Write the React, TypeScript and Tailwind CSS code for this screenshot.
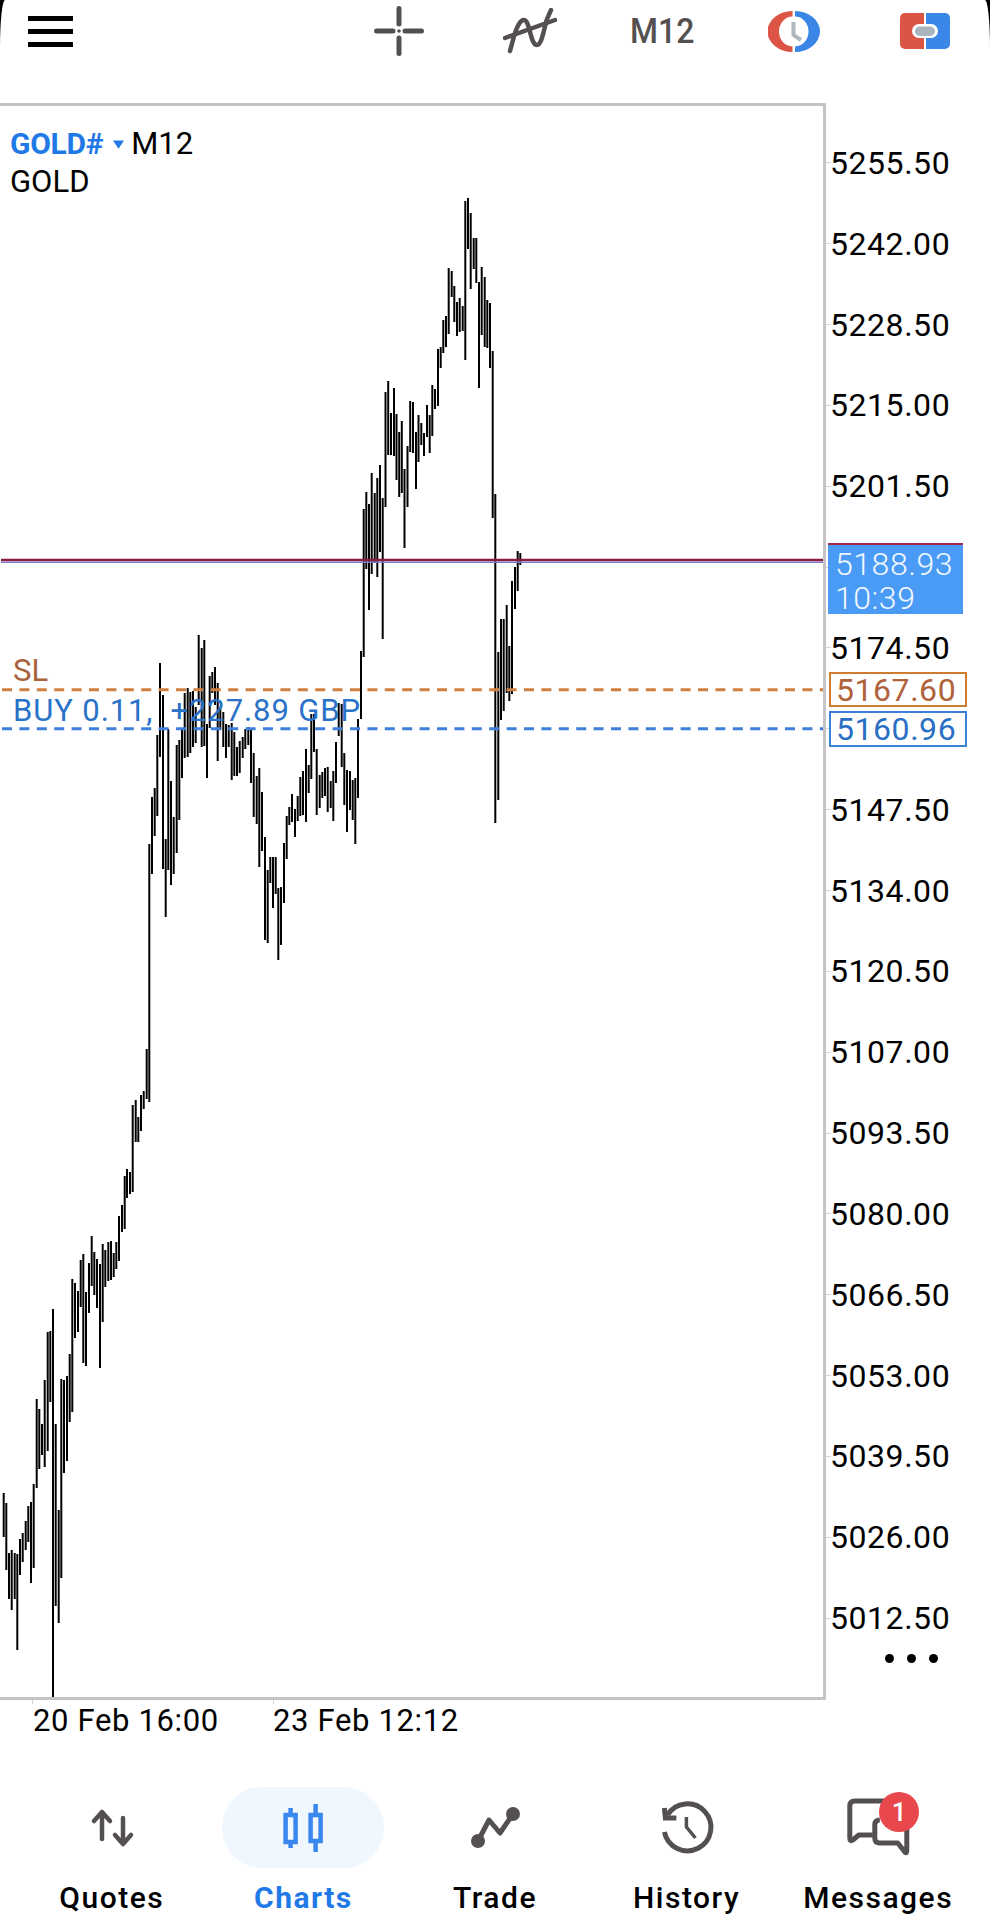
import React from 'react';

// [x, top, bottom] of every bar, traced from the chart
const BARS: number[][] = [
  [3.7,1493,1537],[6.3,1503,1570],[9,1553,1599],[11.7,1550,1610],[14.7,1553,1599],[17.3,1554,1650],[20,1539,1575],[22.7,1533,1562],
  [25.7,1521,1550],[28.3,1506,1542],[31,1502,1583],[33.7,1484,1568],[36.7,1399,1488],[39.3,1409,1469],[42,1424,1455],[44.7,1380,1467],
  [47.7,1332,1451],[50.3,1331,1402],[53,1309,1697],[55.7,1424,1606],[58.7,1510,1623],[61.3,1379,1578],[64,1380,1473],[67,1376,1461],
  [69.7,1354,1422],[72.3,1279,1412],[75,1283,1338],[78,1291,1332],[80.7,1260,1307],[83.3,1254,1363],[86,1292,1366],[89,1263,1313],
  [91.7,1236,1286],[94.3,1252,1295],[97,1259,1308],[100,1264,1368],[102.7,1244,1322],[105.3,1250,1287],[108.3,1242,1281],[111,1241,1280],
  [113.7,1253,1277],[116.3,1242,1269],[119,1216,1261],[122,1205,1232],[124.7,1176,1229],[127,1169,1198],[130,1172,1194],[132.7,1105,1192],
  [135.7,1100,1142],[138.3,1117,1142],[141,1095,1131],[143.7,1091,1109],[146.7,1049,1099],[149.3,844,1102],[152,797,874],[154.7,788,836],
  [157.3,735,816],[160,663,757],[163,695,869],[165.7,839,917],[168.3,729,870],[171,781,885],[173.7,817,874],[176.7,745,853],
  [179.3,740,820],[182,730,778],[184.7,693,758],[187.7,688,757],[190.3,692,753],[193,691,747],[195.7,707,743],[198.7,635,705],
  [201.7,648,747],[204.3,640,746],[207,724,778],[209.7,676,728],[212.3,672,693],[215,667,705],[217.7,683,761],[220.3,707,730],
  [223.3,712,747],[226,724,758],[228.7,725,747],[231.7,723,780],[234.3,732,776],[237,747,776],[239.7,741,773],[242.7,737,758],
  [245.3,729,749],[248.3,727,745],[251,730,783],[253.7,753,817],[256.7,776,824],[259.3,768,867],[262,792,851],[265,837,940],
  [267.7,870,943],[270.3,857,883],[273,857,908],[275.7,857,894],[278.3,888,960],[281,887,945],[284,843,903],[286.7,816,859],
  [289.3,807,825],[292,794,822],[295,809,837],[297.7,796,821],[300.3,777,816],[303,771,815],[306,749,822],[308.7,765,793],
  [311.3,714,779],[314,714,752],[316.7,749,815],[319.7,775,808],[322.3,772,798],[325,768,796],[327.7,767,812],[330.7,781,808],
  [333.3,771,821],[336,742,783],[338.7,703,736],[341.7,704,767],[344.3,753,805],[347,770,832],[350,771,810],[352.7,780,820],
  [355.3,778,844],[358,719,798],[361,651,719],[363.7,509,657],[366.3,492,569],[369,504,610],[371.7,473,574],[374.7,493,563],
  [377.3,478,577],[380,465,552],[382.7,498,639],[385.5,392,507],[388.2,381,455],[391,413,455],[394,388,456],[396.5,414,480],
  [399.2,432,497],[401.8,421,493],[404.5,469,548],[407.5,446,507],[410.2,401,452],[413,402,453],[416,432,489],[418.5,415,462],
  [421.3,423,445],[424,433,456],[427,405,437],[429.7,415,453],[432.3,385,436],[435,389,409],[438,349,406],[440.7,347,368],
  [443.3,320,353],[446,316,347],[448.7,268,334],[451.7,271,297],[454.3,286,322],[457,302,336],[459.7,298,332],[462.7,306,331],
  [465.3,201,360],[468,198,249],[470.7,213,289],[473.7,238,269],[476.3,238,283],[479,282,388],[481.7,267,335],[484.7,277,347],
  [487.3,300,348],[490,303,368],[492.7,351,518],[495.3,494,823],[498.3,652,800],[501,619,720],[503.7,619,711],[506.7,605,693],
  [509.3,646,701],[512,581,694],[515,567,609],[517.7,551,591],[520.3,553,565],
];

// the empty rows sit behind the price and order tags
const AXIS_LABELS = ['5255.50','5242.00','5228.50','5215.00','5201.50','','5174.50','','5147.50','5134.00','5120.50','5107.00','5093.50','5080.00','5066.50','5053.00','5039.50','5026.00','5012.50'];

function Chart() {
  return (
    <svg viewBox="0 106 823 1591" className="absolute inset-0 w-[823px] h-[1591px]">
      {BARS.map(([x, top, bottom]) => (
        <line key={x} x1={x} x2={x} y1={top} y2={bottom} stroke="#000" strokeWidth="2" />
      ))}
      <line x1="1" x2="823" y1="560" y2="560" stroke="#8c1c3e" strokeWidth="2.6" />
      <line x1="1" x2="823" y1="562.2" y2="562.2" stroke="#7d7cc4" strokeWidth="1.6" />
      <line x1="2" x2="823" y1="689.7" y2="689.7" stroke="#cf8040" strokeWidth="3" strokeDasharray="10 7.4" />
      <line x1="2" x2="823" y1="728.7" y2="728.7" stroke="#3f7fdc" strokeWidth="3" strokeDasharray="10 7.4" />
    </svg>
  );
}

function Header() {
  return (
    <div className="flex items-center h-[62px] mb-[41px]">
      <div className="ml-[28px] w-[45px] flex flex-col gap-[8px]">
        <div className="h-[5px] bg-black" />
        <div className="h-[5px] bg-black" />
        <div className="h-[5px] bg-black" />
      </div>
      <svg viewBox="374 6 50 50" className="ml-[301px] w-[50px] h-[50px]" fill="none" stroke="#555050" strokeWidth="5" strokeLinecap="round">
        <path d="M399 8.5V24M399 38V53.5M376.5 31H393M405 31H421.5" />
        <circle cx="399" cy="31" r="1.8" fill="#555050" stroke="none" />
      </svg>
      <svg viewBox="503 8 54 46" className="ml-[79px] w-[54px] h-[46px]" fill="none" stroke="#555050" strokeWidth="4.5" strokeLinecap="round">
        <path d="M510 51L513 40C516 28 520 20 524 20C530 20 530 45 537 45C542 45 544 28 547 19L551 10" />
        <path d="M505 38L555 20" />
      </svg>
      <span className="ml-[73px] w-[65px] text-[32px] font-medium text-[#555050] scale-y-[1.12]">M12</span>
      <svg viewBox="767 11 52 41" className="ml-[73px] w-[52px] h-[41px]">
        <path d="M791.5 11A25 20.5 0 0 0 791.5 52V46.5A13.5 15 0 0 1 791.5 16.5Z" fill="#dc5445" />
        <path d="M794 11A25 20.5 0 0 1 794 52V46.5A13.5 15 0 0 0 794 16.5Z" fill="#3b87e8" />
        <path d="M792.5 22V35L800 40" fill="none" stroke="#b0b8c0" strokeWidth="4" />
      </svg>
      <svg viewBox="899 13 50 36" className="ml-[80px] w-[50px] h-[36px]">
        <path d="M904 13H923V49H904A5 5 0 0 1 899 44V18A5 5 0 0 1 904 13Z" fill="#dc5445" />
        <path d="M925 13H944A5 5 0 0 1 949 18V44A5 5 0 0 1 944 49H925Z" fill="#3b87e8" />
        <rect x="911" y="24" width="26" height="14" rx="7" fill="#fff" />
        <rect x="914" y="26.5" width="20" height="9.5" rx="4.7" fill="#aab4be" />
      </svg>
    </div>
  );
}

function PriceAxis() {
  return (
    <div className="relative flex-1 pt-[19.5px] text-[32px] leading-none tracking-[0.55px] text-black">
      {AXIS_LABELS.map((label, i) => (
        <div key={i} className="h-[80.85px] flex items-center">
          <div className="w-[5px] h-px bg-gray-300" />
          <span className="-ml-[1px]">{label}</span>
        </div>
      ))}
      <div className="absolute left-[2px] top-[440px] w-[135px] h-[71px] border-t-[2px] border-[#a52a4a] bg-[#4a9bf5] pl-[7px] pt-[2px] text-[#f2f8ff] leading-[34px] font-light">
        <div>5188.93</div>
        <div>10:39</div>
      </div>
      <div className="absolute left-[3px] top-[569px] w-[138px] h-[35px] border-[2px] border-[#d07b32] pl-[5px] flex items-center text-[#b0623a]">5167.60</div>
      <div className="absolute left-[3px] top-[608px] w-[138px] h-[36px] border-[2px] border-[#3b82d6] pl-[5px] flex items-center text-[#2a6fc4]">5160.96</div>
      <div className="absolute left-[59px] top-[1551px] flex gap-[13px]">
        <div className="w-[9px] h-[9px] rounded-full bg-black" />
        <div className="w-[9px] h-[9px] rounded-full bg-black" />
        <div className="w-[9px] h-[9px] rounded-full bg-black" />
      </div>
    </div>
  );
}

function TimeAxis() {
  return (
    <div className="flex h-[87px] pl-[32px] text-[31px] leading-none tracking-[0.65px] text-black">
      <div className="w-[241px]">
        <div className="w-px h-[4px] bg-gray-300" />
        <div className="mt-[1px] ml-[1px]">20 Feb 16:00</div>
      </div>
      <div>
        <div className="w-px h-[4px] bg-gray-300" />
        <div className="mt-[1px]">23 Feb 12:12</div>
      </div>
    </div>
  );
}

const TAB_ICONS: Record<string, React.ReactNode> = {
  Quotes: (
    <svg viewBox="80 1796 64 64" className="w-[64px] h-[64px]" fill="none" stroke="#555050" strokeWidth="4.5" strokeLinecap="round" strokeLinejoin="round">
      <path d="M102 1839V1813M94 1821L102 1812L110 1821" />
      <path d="M123 1818V1843M115 1835L123 1844L131 1835" />
    </svg>
  ),
  Charts: (
    <svg viewBox="271.4 1796 64 64" className="w-[64px] h-[64px]" fill="none" stroke="#3b87f0" strokeWidth="4.5">
      <path d="M291 1808V1848M316 1804V1852" />
      <rect x="286" y="1815" width="10" height="27" fill="#f0f7fe" />
      <rect x="311" y="1815" width="10" height="26" fill="#f0f7fe" />
    </svg>
  ),
  Trade: (
    <svg viewBox="463 1796 64 64" className="w-[64px] h-[64px]" fill="none" stroke="#555050" strokeWidth="5" strokeLinejoin="round">
      <path d="M478 1841L489 1820L500 1833L513 1814" />
      <circle cx="478" cy="1841" r="7" fill="#555050" stroke="none" />
      <circle cx="513" cy="1814" r="7" fill="#555050" stroke="none" />
    </svg>
  ),
  History: (
    <svg viewBox="654.6 1796 64 64" className="w-[64px] h-[64px]" fill="none" stroke="#555050" strokeWidth="5">
      <path d="M667 1815A23.5 23.5 0 1 1 664 1832" />
      <path d="M664 1808L665 1818L676 1818" />
      <path d="M686 1817V1827L695 1838" strokeWidth="3.5" />
    </svg>
  ),
  Messages: (
    <svg viewBox="846.2 1796 64 64" className="w-[64px] h-[64px]" fill="none" stroke="#555050" strokeWidth="5" strokeLinejoin="round">
      <path d="M886 1801H855Q850 1801 850 1806V1838Q850 1842 853 1840L859 1835H873" />
      <path d="M880 1820Q875 1820 875 1825V1838Q875 1843 880 1843H898L905 1852Q907 1854 907 1850V1825Q907 1820 902 1820" />
    </svg>
  ),
};

const TABS = ['Quotes', 'Charts', 'Trade', 'History', 'Messages'];

function BottomNav() {
  return (
    <div className="grid grid-cols-5 px-4">
      {TABS.map((tab) => (
        <div key={tab} className="flex flex-col items-center">
          <div className={`relative w-[162px] h-[81px] rounded-[40px] flex items-center justify-center ${tab === 'Charts' ? 'bg-[#f0f7fe]' : ''}`}>
            {TAB_ICONS[tab]}
            {tab === 'Messages' && (
              <div className="absolute left-[82px] top-[5px] w-[40px] h-[40px] rounded-full bg-[#e8474c] flex items-center justify-center text-[26px] font-medium text-white">1</div>
            )}
          </div>
          <span className={`mt-[12px] text-[30px] leading-[36px] tracking-[1.5px] ${tab === 'Charts' ? 'font-bold text-[#1f7ae8]' : 'font-medium text-black'}`}>{tab}</span>
        </div>
      ))}
    </div>
  );
}

export default function App() {
  return (
    <div className="w-[990px] h-[1920px] bg-black overflow-hidden">
      <div className="h-full bg-white rounded-t-[5px_48px] font-['Roboto',sans-serif]">
        <Header />
        <div className="flex">
          <div className="relative w-[826px] h-[1597px] border-t-[3px] border-r-[3px] border-b-[3px] border-[#c4c4c4]">
            <Chart />
            <div className="absolute left-[10px] top-[19px] text-[31px] leading-[38px] text-black">
              <div className="flex items-center">
                <span className="font-bold text-[30px] tracking-[-0.3px] text-[#1f7ae8]">GOLD#</span>
                <svg viewBox="0 0 12 9" className="ml-[10px] mr-[7px] w-[11px] h-[9px]"><path d="M0 0H12L6 9Z" fill="#1f7ae8" /></svg>
                <span>M12</span>
              </div>
              <div>GOLD</div>
            </div>
            <div className="absolute left-[13px] top-[547px] text-[31px] leading-[36px] text-[#a8623a]">SL</div>
            <div className="absolute left-[13px] top-[587px] text-[31px] leading-[36px] tracking-[0.9px] text-[#2a72c8] whitespace-pre">BUY 0.11,  +227.89 GBP</div>
          </div>
          <PriceAxis />
        </div>
        <TimeAxis />
        <BottomNav />
      </div>
    </div>
  );
}
